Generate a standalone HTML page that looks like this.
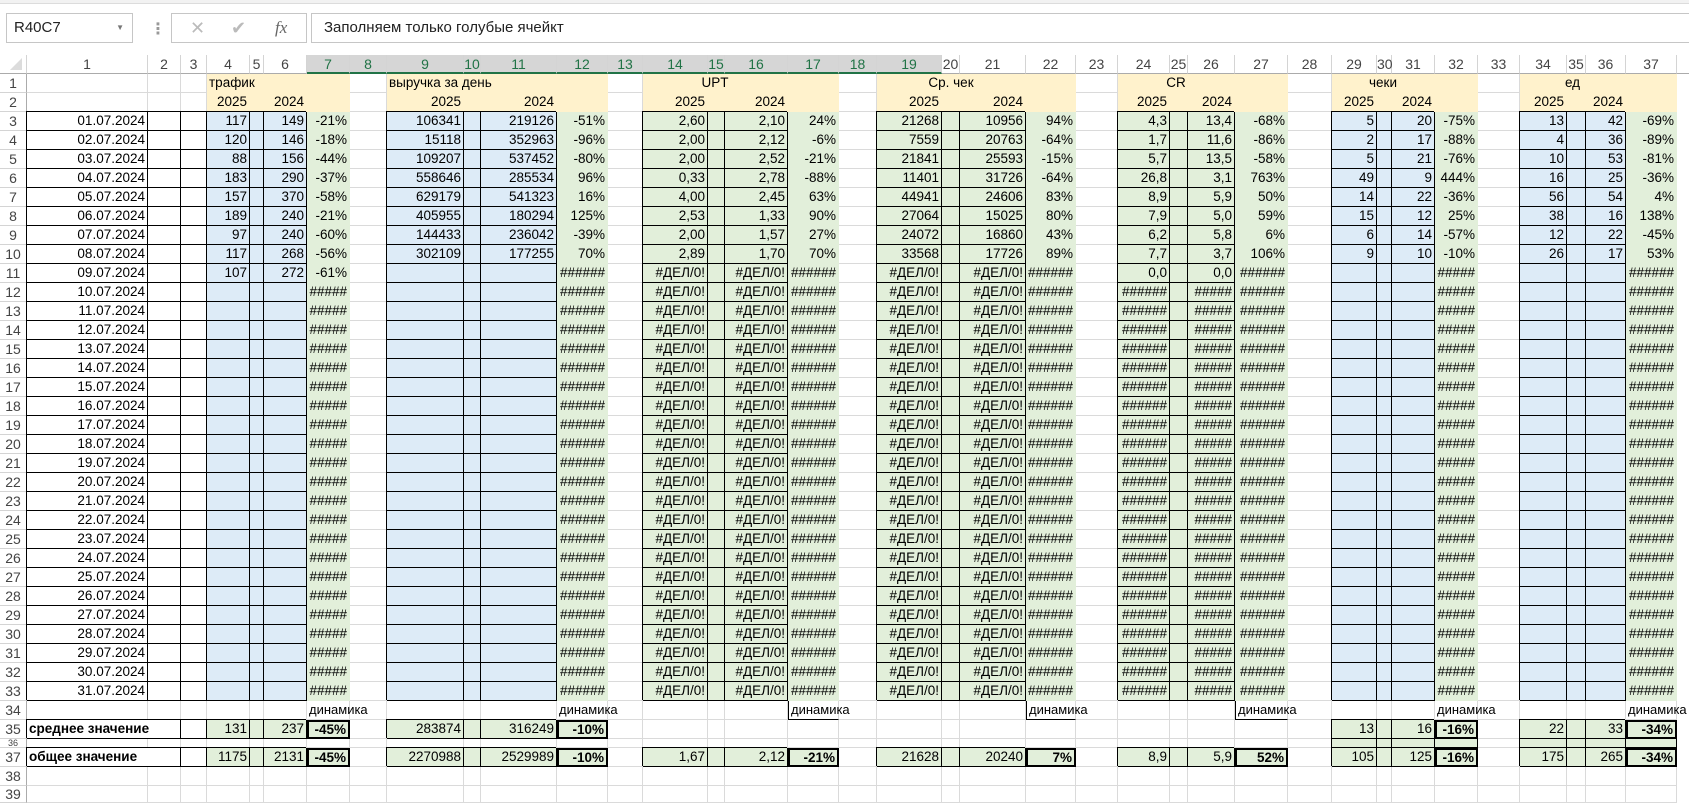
<!DOCTYPE html>
<html><head><meta charset="utf-8">
<style>
*{box-sizing:border-box;margin:0;padding:0}
body{width:1689px;height:803px;background:#fff;position:relative;overflow:hidden;font-family:"Liberation Sans","DejaVu Sans",sans-serif;font-size:13.5px;color:#000}
.c{position:absolute;white-space:nowrap;line-height:18px;padding:0 2px;border-right:1px solid #dadada;border-bottom:1px solid #dadada}
.b{border-right:1px solid #000;border-bottom:1px solid #000;box-shadow:-1px -1px 0 #000}
.t{border:2px solid #000;font-weight:bold;line-height:15px}
.r{text-align:right}.ce{text-align:center}
.z{z-index:3}
.h{position:absolute;text-align:center;color:#444;font-size:14px;border-right:1px solid #d4d4d4;border-bottom:1px solid #ababab;line-height:19px;background:#fff}
.rh{position:absolute;left:0;width:27px;text-align:center;color:#444;font-size:14px;border-right:1px solid #ababab;border-bottom:1px solid #d4d4d4;background:#fff;line-height:18px}
</style></head><body>
<div style="position:absolute;left:0;top:0;width:1689px;height:4px;background:#f2f2f2;border-bottom:1px solid #dcdcdc"></div>
<div style="position:absolute;left:6px;top:13px;width:127px;height:30px;border:1px solid #c6c6c6;font-size:15px;line-height:28px;padding-left:7px;color:#222">R40C7<span style="position:absolute;right:8px;top:0;font-size:8px;color:#777">▼</span></div>
<div style="position:absolute;left:150px;top:19px;font-size:16px;color:#999;font-weight:bold">⋮</div>
<div style="position:absolute;left:171px;top:13px;width:136px;height:30px;border:1px solid #c6c6c6;color:#bbb;font-size:18px;line-height:28px">
<span style="position:absolute;left:18px">✕</span><span style="position:absolute;left:59px">✔</span><span style="position:absolute;left:103px;color:#666;font-family:'Liberation Serif',serif;font-style:italic;font-size:17px">fx</span></div>
<div style="position:absolute;left:311px;top:13px;width:1390px;height:30px;border:1px solid #c6c6c6;font-size:15px;line-height:28px;padding-left:12px;color:#222">Заполняем только голубые ячейкт</div>
<div id="g"></div>
<script>
var W=[121,33,26,43,14,43,43,37,77,17,76,51,35,65,17,63,51,38,65,18,66,50,42,52,18,47,53,44,45,15,43,43,42,47,19,40,51];
var X=[27];for(var i=0;i<W.length;i++)X.push(X[i]+W[i]);
function RY(n){if(n<=36)return 74+(n-1)*19;return 748+(n-37)*19;}
function RH(n){return n==36?9:(n==39?17:19);}
var H='';
H+='<div class="h" style="left:0;top:55px;width:27px;height:19px;background:#fff"><div style="position:absolute;right:4px;bottom:3px;width:0;height:0;border-left:12px solid transparent;border-bottom:12px solid #dcdcdc"></div></div>';
for(var c=1;c<=37;c++){var sel=c>=7&&c<=19;
H+='<div class="h" style="left:'+X[c-1]+'px;top:55px;width:'+W[c-1]+'px;height:19px;'+(sel?'background:#d6d6d6;color:#217346;border-bottom:2px solid #217346;':'')+'">'+c+'</div>';}
H+='<div class="h" style="left:'+X[37]+'px;top:55px;width:20px;height:19px;border-right:none"></div>';
for(var r=1;r<=39;r++)H+='<div class="rh" style="top:'+RY(r)+'px;height:'+RH(r)+'px;line-height:'+(RH(r)-1)+'px;font-size:'+(r==36?'9px':'14px')+'">'+r+'</div>';
var cells={};
function S(r,c,o){cells[r+'_'+c]=o;}
var dates=[];for(var d=1;d<=31;d++)dates.push((d<10?'0':'')+d+'.07.2024');
for(var r=3;r<=33;r++){S(r,1,{t:dates[r-3],cl:'b r'});S(r,2,{cl:'b'});S(r,3,{cl:'b'});}
S(35,1,{t:'среднее значение',cl:'b',w:2,st:'font-weight:bold'});S(35,3,{cl:'b'});
S(37,1,{t:'общее значение',cl:'b',w:2,st:'font-weight:bold'});S(37,3,{cl:'b'});
var G=[
{c:4,lab:'трафик',left:1,inp:1,a:[117,120,88,183,157,189,97,117,107],b:[149,146,156,290,370,240,240,268,272],d:['-21%','-18%','-44%','-37%','-58%','-21%','-60%','-56%','-61%'],rest:['','','#####'],s35:['131','237','-45%'],s37:['1175','2131','-45%']},
{c:9,lab:'выручка за день',left:1,inp:1,a:[106341,15118,109207,558646,629179,405955,144433,302109],b:[219126,352963,537452,285534,541323,180294,236042,177255],d:['-51%','-96%','-80%','96%','16%','125%','-39%','70%'],r11:['','','######'],rest:['','','######'],s35:['283874','316249','-10%'],s37:['2270988','2529989','-10%']},
{c:14,lab:'UPT',a:['2,60','2,00','2,00','0,33','4,00','2,53','2,00','2,89'],b:['2,10','2,12','2,52','2,78','2,45','1,33','1,57','1,70'],d:['24%','-6%','-21%','-88%','63%','90%','27%','70%'],r11:['#ДЕЛ/0!','#ДЕЛ/0!','######'],rest:['#ДЕЛ/0!','#ДЕЛ/0!','######'],s37:['1,67','2,12','-21%'],dl:1},
{c:19,lab:'Ср. чек',a:[21268,7559,21841,11401,44941,27064,24072,33568],b:[10956,20763,25593,31726,24606,15025,16860,17726],d:['94%','-64%','-15%','-64%','83%','80%','43%','89%'],r11:['#ДЕЛ/0!','#ДЕЛ/0!','######'],rest:['#ДЕЛ/0!','#ДЕЛ/0!','######'],s37:['21628','20240','7%'],dl:1},
{c:24,lab:'CR',a:['4,3','1,7','5,7','26,8','8,9','7,9','6,2','7,7'],b:['13,4','11,6','13,5','3,1','5,9','5,0','5,8','3,7'],d:['-68%','-86%','-58%','763%','50%','59%','6%','106%'],r11:['0,0','0,0','######'],rest:['######','#####','######'],s37:['8,9','5,9','52%'],dl:1},
{c:29,lab:'чеки',inp:1,a:[5,2,5,49,14,15,6,9],b:[20,17,21,9,22,12,14,10],d:['-75%','-88%','-76%','444%','-36%','25%','-57%','-10%'],r11:['','','#####'],rest:['','','#####'],s35:['13','16','-16%'],s36:1,s37:['105','125','-16%']},
{c:34,lab:'ед',inp:1,a:[13,4,10,16,56,38,12,26],b:[42,36,53,25,54,16,22,17],d:['-69%','-89%','-81%','-36%','4%','138%','-45%','53%'],r11:['','','######'],rest:['','','######'],s35:['22','33','-34%'],s36:1,s37:['175','265','-34%']}
];
G.forEach(function(g){var c=g.c;var Y='background:#fff2cc;border-color:transparent;';
 for(var k=0;k<4;k++){S(1,c+k,{st:Y});S(2,c+k,{st:Y});}
 if(g.left)S(1,c,{t:g.lab,st:Y,cl:'z'});
 else S(1,c,{t:g.lab,st:Y,w:3,cl:'ce'});
 S(2,c,{t:'2025',st:Y,cl:'r'});S(2,c+2,{t:'2024',st:Y,cl:'r'});
 var bg=g.inp?'background:#ddebf7;':'background:#e2efda;';var GR='background:#e2efda;border-color:transparent;';
 for(var r=3;r<=33;r++){var i=r-3,v;
  if(i<g.a.length)v=[g.a[i],g.b[i],g.d[i]];else if(r==11&&g.r11)v=g.r11;else v=g.rest;
  S(r,c,{t:v[0],cl:'b r',st:bg});S(r,c+1,{cl:'b',st:bg});S(r,c+2,{t:v[1],cl:'b r',st:bg});S(r,c+3,{t:v[2],cl:'r',st:GR});}
 S(34,c+3,{t:'динамика',cl:'z',st:'font-size:13px;'+(g.dl?'border-left:1px solid #000;border-bottom:1px solid #000;':'')});
 function tot(r,v){S(r,c,{t:v[0],cl:'b r',st:'background:#e2efda;'});S(r,c+1,{cl:'b',st:'background:#e2efda;'});S(r,c+2,{t:v[1],cl:'b r',st:'background:#e2efda;'});S(r,c+3,{t:v[2],cl:'t r',st:'background:#e2efda;'});}
 if(g.s35)tot(35,g.s35);tot(37,g.s37);
 if(g.s36)for(var k=0;k<4;k++)S(36,c+k,{cl:'b',st:'background:#e2efda;'});
});
for(var r=1;r<=39;r++){var skip=0;for(var c=1;c<=37;c++){if(skip>0){skip--;continue;}
 var o=cells[r+'_'+c]||{};var w=W[c-1];if(o.w){for(var k=1;k<o.w;k++)w+=W[c-1+k];skip=o.w-1;}
 var h=RH(r);
 H+='<div class="c '+(o.cl||'')+'" style="left:'+X[c-1]+'px;top:'+RY(r)+'px;width:'+w+'px;height:'+h+'px;'+(o.st||'')+(h<15?'font-size:1px;':'')+'">'+(o.t!==undefined?o.t:'')+'</div>';}}
document.getElementById('g').innerHTML=H;
</script>
</body></html>
